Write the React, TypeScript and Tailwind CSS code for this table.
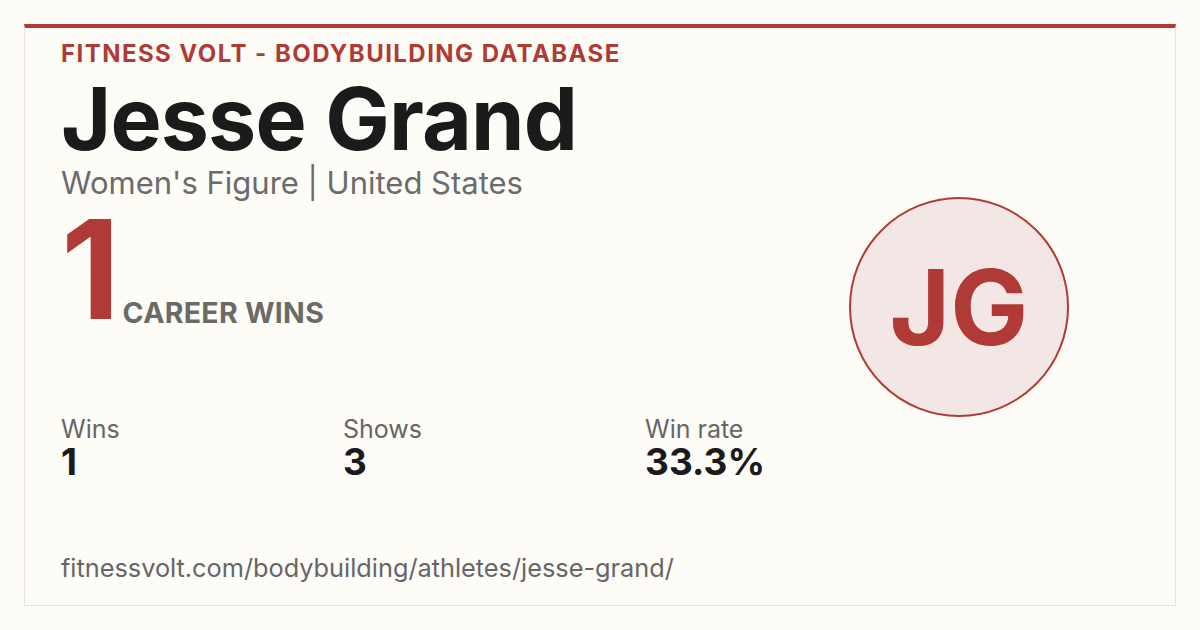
import React from "react";

export default function App() {
  return (
    <div
      className="w-[1200px] h-[630px] bg-[#fdfcf7] p-6"
      style={{ fontFamily: "Inter, 'Noto Sans', sans-serif" }}
    >
      <div className="h-[582px] w-[1152px] border border-[#e4e2db] border-t-4 border-t-[#b03a35] flex px-9 pt-[11px]">
        <div className="flex-1 flex flex-col">
          <div className="text-[24px] font-bold tracking-[0.06em] text-[#b03a35] leading-[30px]">
            FITNESS VOLT - BODYBUILDING DATABASE
          </div>
          <div className="text-[86px] font-bold text-[#1b1b1b] leading-[88px] tracking-[-0.01em] mt-[6px]">
            Jesse Grand
          </div>
          <div className="text-[31px] text-[#6b6b6b] leading-[36px] mt-[2px]">
            Women's Figure | United States
          </div>
          <div className="flex items-end mt-[14px]">
            <div className="text-[137px] font-bold text-[#b03a35] leading-[108px] tracking-[-0.04em]">
              1
            </div>
            <div className="text-[28.5px] font-bold text-[#6b6b66] leading-[30px] ml-[8px] mb-[-5px] tracking-[0.01em]">
              CAREER WINS
            </div>
          </div>
          <div className="grid grid-cols-[282px_302px_auto] mt-[93px]">
            <div className="flex flex-col">
              <span className="text-[25px] text-[#666] leading-[27px]">Wins</span>
              <span className="text-[37px] font-bold text-[#1b1b1b] leading-[38px]">1</span>
            </div>
            <div className="flex flex-col">
              <span className="text-[25px] text-[#666] leading-[27px]">Shows</span>
              <span className="text-[37px] font-bold text-[#1b1b1b] leading-[38px]">3</span>
            </div>
            <div className="flex flex-col">
              <span className="text-[25px] text-[#666] leading-[27px]">Win rate</span>
              <span className="text-[37px] font-bold text-[#1b1b1b] leading-[38px]">33.3%</span>
            </div>
          </div>
          <div className="text-[25.3px] text-[#666] leading-[30px] mt-[72px]">
            fitnessvolt.com/bodybuilding/athletes/jesse-grand/
          </div>
        </div>
        <div className="w-[340px] flex justify-start pl-[50px] pt-[158px]">
          <div className="w-[220px] h-[220px] rounded-full bg-[#f3e7e6] border-2 border-[#b03a35] flex items-center justify-center">
            <span className="text-[104px] font-bold text-[#b03a35] leading-none">JG</span>
          </div>
        </div>
      </div>
    </div>
  );
}
